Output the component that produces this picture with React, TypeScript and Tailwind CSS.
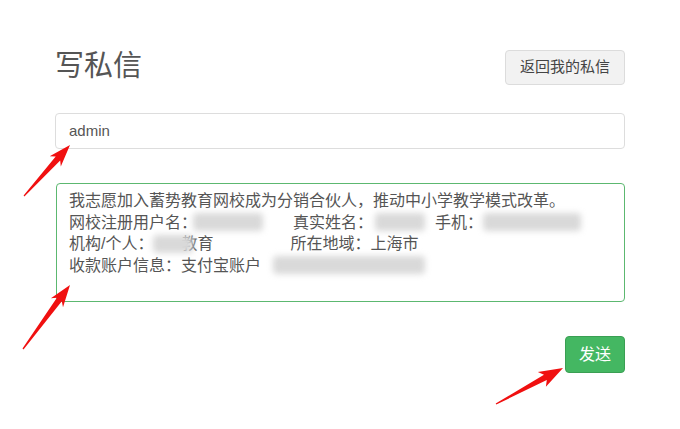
import React from "react";

const FONT = '"Liberation Sans","Noto Sans CJK SC",sans-serif';

function arrowPoints(x1: number, y1: number, x2: number, y2: number, headLen: number, headW: number, shaftW: number) {
  const len = Math.hypot(x2 - x1, y2 - y1);
  const ux = (x2 - x1) / len;
  const uy = (y2 - y1) / len;
  const px = -uy;
  const py = ux;
  const bx = x2 - ux * headLen;
  const by = y2 - uy * headLen;
  const wx = bx - ux * 4;
  const wy = by - uy * 4;
  const pts = [
    [x1 + px * 0.6, y1 + py * 0.6],
    [bx + (px * shaftW) / 2, by + (py * shaftW) / 2],
    [wx + (px * headW) / 2, wy + (py * headW) / 2],
    [x2, y2],
    [wx - (px * headW) / 2, wy - (py * headW) / 2],
    [bx - (px * shaftW) / 2, by - (py * shaftW) / 2],
    [x1 - px * 0.6, y1 - py * 0.6],
  ];
  return pts.map((p) => p.map((v) => v.toFixed(1)).join(",")).join(" ");
}

function Blur({ className }: { className: string }) {
  return <span aria-hidden className={`inline-block h-[18px] rounded-sm bg-[#d9d9d9] blur-[3px] ${className}`} />;
}

export default function App() {
  return (
    <div className="relative h-[429px] w-[680px] overflow-hidden bg-white text-[#555]" style={{ fontFamily: FONT }}>
      <div className="mx-[55px] pt-[46px]">
        <div className="flex items-center justify-between">
          <h1 className="text-[29px] font-normal leading-[38px] text-[#555]">写私信</h1>
          <button className="mt-[4px] h-[35px] w-[120px] rounded-[4px] border border-[#dcdcdc] bg-[#f2f2f2] text-[15px] text-[#444]">
            返回我的私信
          </button>
        </div>

        <div className="mt-[28px] flex h-[36px] items-center rounded-[4px] border border-[#dddddd] px-[13px] text-[15px] text-[#555]">
          admin
        </div>

        <div className="mt-[34px] ml-px h-[119px] rounded-[4px] border border-[#5cb870] px-[12px] pt-[6px] text-[16px] leading-[21.5px] text-[#555]">
          <div className="whitespace-nowrap">我志愿加入蓄势教育网校成为分销合伙人，推动中小学教学模式改革。</div>
          <div className="flex items-center whitespace-nowrap">
            <span>网校注册用户名：</span>
            <Blur className="ml-[-4px] w-[70px]" />
            <span className="ml-[30px]">真实姓名：</span>
            <Blur className="ml-[2px] w-[50px]" />
            <span className="ml-[10px]">手机：</span>
            <Blur className="w-[98px]" />
          </div>
          <div className="flex items-center whitespace-nowrap">
            <span>机构/个人：</span>
            <Blur className="relative z-10 mr-[-12px] w-[40px]" />
            <span>教育</span>
            <span className="ml-[77px]">所在地域：上海市</span>
          </div>
          <div className="flex items-center whitespace-nowrap">
            <span>收款账户信息：支付宝账户</span>
            <Blur className="ml-[12px] w-[152px]" />
          </div>
        </div>

        <div className="mt-[34px] flex justify-end">
          <button className="h-[37px] w-[60px] rounded-[4px] border border-[#3a9f53] bg-[#44b762] text-[16px] text-white">
            发送
          </button>
        </div>
      </div>

      <svg aria-hidden className="pointer-events-none absolute inset-0" width="680" height="429">
        <polygon points={arrowPoints(24, 196, 70, 145, 18, 15, 6)} fill="#f01010" />
        <polygon points={arrowPoints(23, 349, 70, 285, 18, 15, 6)} fill="#f01010" />
        <polygon points={arrowPoints(496, 404, 563, 368, 20, 17, 6)} fill="#f01010" />
      </svg>
    </div>
  );
}
